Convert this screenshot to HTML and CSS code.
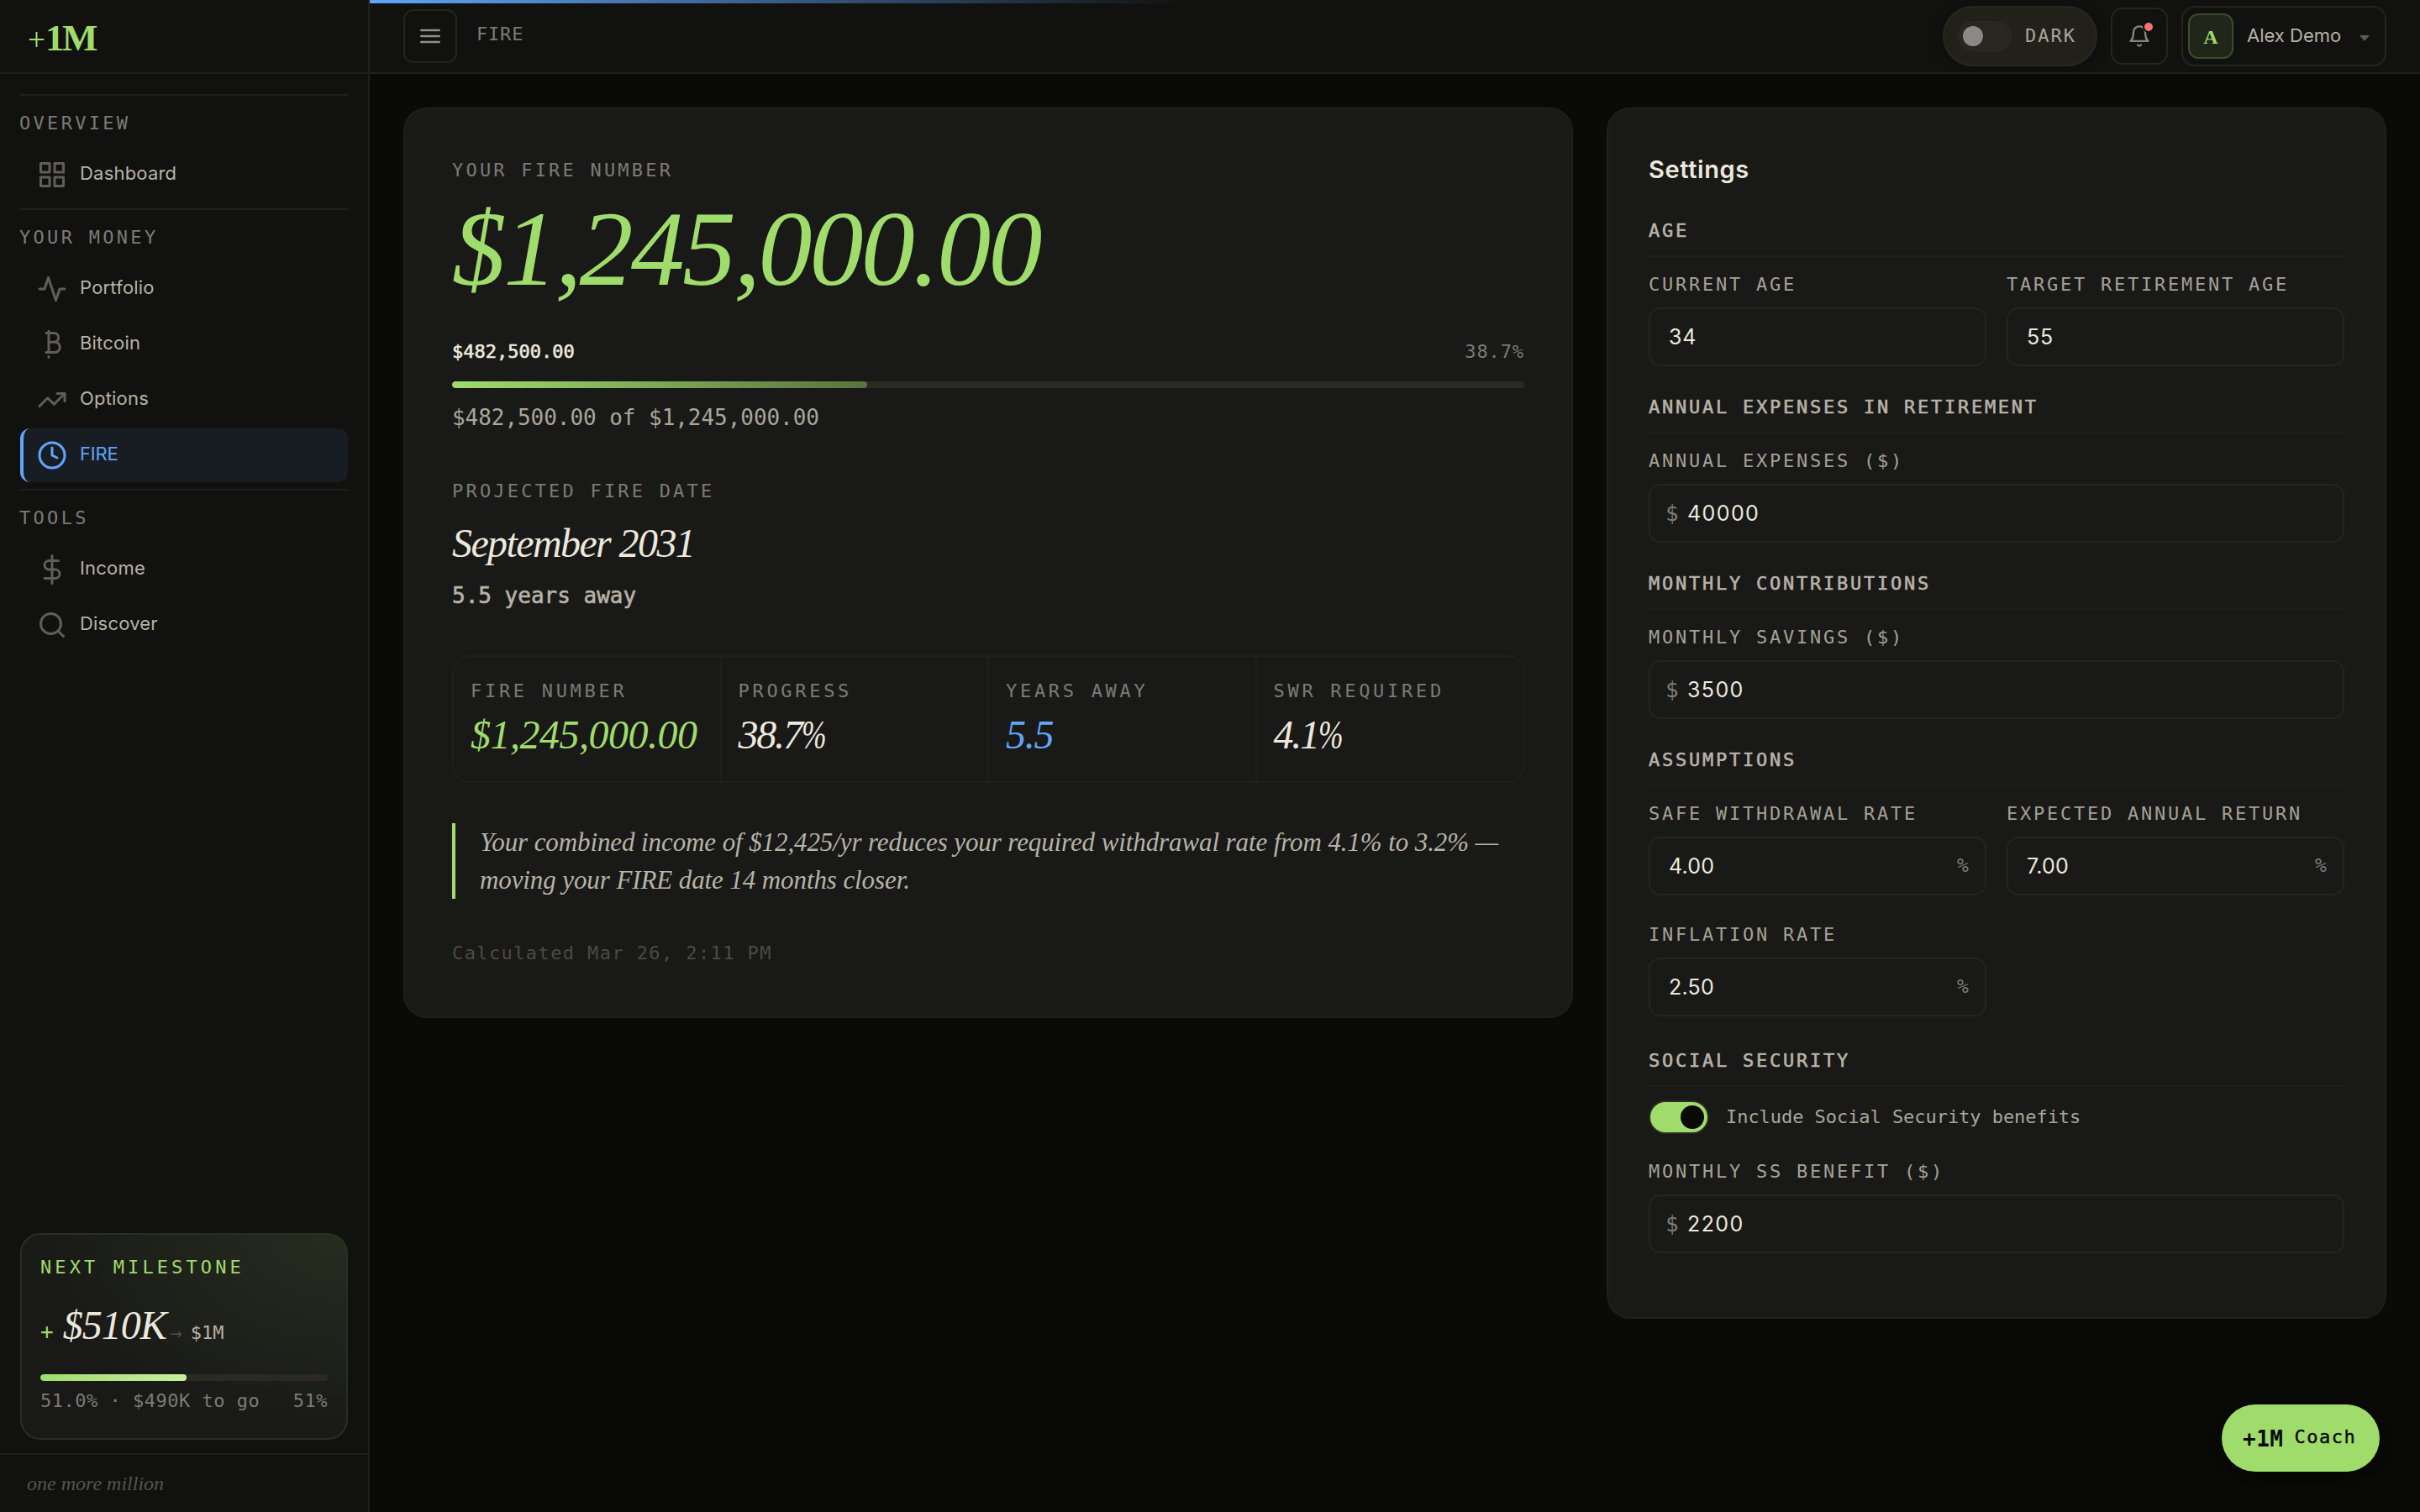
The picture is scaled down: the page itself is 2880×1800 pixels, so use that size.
FILE: index.html
```html
<!DOCTYPE html>
<html lang="en">
<head>
    <meta charset="UTF-8">
    <meta name="viewport" content="width=device-width, initial-scale=1.0">
    <title>+1M - FIRE</title>
    <link rel="stylesheet" href="styles.css">
</head>
<body>
    <div class="app">
        <aside class="sidebar">
            <div class="logo"><span class="logo-plus">+</span>1M</div>
            <nav class="nav">
                <div class="nav-section">
                    <div class="nav-label">Overview</div>
                    <a class="nav-item">
                        <svg class="icon" viewBox="0 0 24 24"><rect x="3" y="3" width="7" height="7"/><rect x="14" y="3" width="7" height="7"/><rect x="3" y="14" width="7" height="7"/><rect x="14" y="14" width="7" height="7"/></svg>
                        <span>Dashboard</span>
                    </a>
                </div>
                <div class="nav-section">
                    <div class="nav-label">Your Money</div>
                    <a class="nav-item">
                        <svg class="icon" viewBox="0 0 24 24"><path d="M22 12h-4l-3 9L9 3l-3 9H2"/></svg>
                        <span>Portfolio</span>
                    </a>
                    <a class="nav-item">
                        <svg class="icon" viewBox="0 0 24 24"><path d="M9.300 1.500v16.800M7.300 3h6.200a3.600 3.600 0 0 1 0 7.200H9.300h4.900a4 4 0 0 1 0 8.100H7.300M9.300 21.700v.4"/></svg>
                        <span>Bitcoin</span>
                    </a>
                    <a class="nav-item">
                        <svg class="icon" viewBox="0 0 24 24"><path d="M22 7l-8.500 8.500-5-5L2 17"/><path d="M16 7h6v6"/></svg>
                        <span>Options</span>
                    </a>
                    <a class="nav-item active">
                        <svg class="icon" viewBox="0 0 24 24"><circle cx="12" cy="12" r="10"/><path d="M12 6v6l4 2"/></svg>
                        <span>FIRE</span>
                    </a>
                </div>
                <div class="nav-section">
                    <div class="nav-label">Tools</div>
                    <a class="nav-item">
                        <svg class="icon" viewBox="0 0 24 24"><path d="M12 1v22M17 5H9.500a3.500 3.500 0 0 0 0 7h5a3.500 3.500 0 0 1 0 7H6"/></svg>
                        <span>Income</span>
                    </a>
                    <a class="nav-item">
                        <svg class="icon" viewBox="0 0 24 24"><circle cx="11" cy="11" r="8"/><path d="M21 21l-4.350-4.350"/></svg>
                        <span>Discover</span>
                    </a>
                </div>
            </nav>

            <div class="milestone">
                <div class="milestone-title">Next Milestone</div>
                <div class="milestone-row">
                    <span class="plus">+</span>
                    <span class="amount">$510K</span>
                    <span class="arrow">→</span>
                    <span class="goal">$1M</span>
                </div>
                <div class="bar"><div class="bar-fill light" style="width: 51%;"></div></div>
                <div class="milestone-meta"><span>51.0% · $490K to go</span><span>51%</span></div>
            </div>
            <div class="tagline">one more million</div>
        </aside>

        <div class="content">
            <header class="topbar">
                <button class="menu-btn">
                    <svg width="24" height="18" viewBox="0 0 24 18"><path d="M1.300 2h21.400M1.300 9h21.400M1.300 16h21.400"/></svg>
                </button>
                <div class="crumb">FIRE</div>
                <div class="theme-toggle">
                    <span class="theme-track"><span class="theme-knob"></span></span>
                    <span>DARK</span>
                </div>
                <button class="bell-btn">
                    <svg width="28" height="28" viewBox="0 0 24 24"><path d="M18 8A6 6 0 0 0 6 8c0 7-3 9-3 9h18s-3-2-3-9"/><path d="M13.730 21a2 2 0 0 1-3.460 0"/></svg>
                    <span class="dot"></span>
                </button>
                <div class="user">
                    <span class="avatar">A</span>
                    <span class="user-name">Alex Demo</span>
                    <span class="caret"></span>
                </div>
            </header>

            <main class="main">
                <section class="card result">
                    <div class="label">Your FIRE Number</div>
                    <div class="fire-number">$1,245,000.00</div>
                    <div class="progress-head"><strong>$482,500.00</strong><span>38.7%</span></div>
                    <div class="bar"><div class="bar-fill fade" style="width: 38.7%;"></div></div>
                    <div class="progress-text">$482,500.00 of $1,245,000.00</div>

                    <div class="label date-label">Projected FIRE Date</div>
                    <div class="fire-date">September 2031</div>
                    <div class="years">5.5 years away</div>

                    <div class="stats">
                        <div class="stat">
                            <div class="label">FIRE Number</div>
                            <div class="value green">$1,245,000.00</div>
                        </div>
                        <div class="stat">
                            <div class="label">Progress</div>
                            <div class="value tight">38.7<span class="pct">%</span></div>
                        </div>
                        <div class="stat">
                            <div class="label">Years Away</div>
                            <div class="value blue">5.5</div>
                        </div>
                        <div class="stat">
                            <div class="label">SWR Required</div>
                            <div class="value tight">4.1<span class="pct">%</span></div>
                        </div>
                    </div>

                    <blockquote class="quote">Your combined income of $12,425/yr reduces your required withdrawal rate from 4.1% to 3.2% —<br>moving your FIRE date 14 months closer.</blockquote>
                    <div class="calculated">Calculated Mar 26, 2:11 PM</div>
                </section>

                <section class="card settings">
                    <h2>Settings</h2>

                    <div class="group">
                        <h3>Age</h3>
                        <div class="fields">
                            <div class="field">
                                <label>Current Age</label>
                                <div class="input">34</div>
                            </div>
                            <div class="field">
                                <label>Target Retirement Age</label>
                                <div class="input">55</div>
                            </div>
                        </div>
                    </div>

                    <div class="group">
                        <h3>Annual Expenses in Retirement</h3>
                        <div class="field">
                            <label>Annual Expenses ($)</label>
                            <div class="input money"><span class="prefix">$</span>40000</div>
                        </div>
                    </div>

                    <div class="group">
                        <h3>Monthly Contributions</h3>
                        <div class="field">
                            <label>Monthly Savings ($)</label>
                            <div class="input money"><span class="prefix">$</span>3500</div>
                        </div>
                    </div>

                    <div class="group assumptions">
                        <h3>Assumptions</h3>
                        <div class="fields">
                            <div class="field">
                                <label>Safe Withdrawal Rate</label>
                                <div class="input percent">4.00<span class="suffix">%</span></div>
                            </div>
                            <div class="field">
                                <label>Expected Annual Return</label>
                                <div class="input percent">7.00<span class="suffix">%</span></div>
                            </div>
                            <div class="field">
                                <label>Inflation Rate</label>
                                <div class="input percent">2.50<span class="suffix">%</span></div>
                            </div>
                        </div>
                    </div>

                    <div class="group">
                        <h3>Social Security</h3>
                        <div class="switch-row">
                            <span class="switch"><span class="switch-knob"></span></span>
                            <span>Include Social Security benefits</span>
                        </div>
                        <div class="field">
                            <label>Monthly SS Benefit ($)</label>
                            <div class="input money"><span class="prefix">$</span>2200</div>
                        </div>
                    </div>
                </section>
            </main>
        </div>

        <div class="load-bar"></div>
        <button class="coach"><b>+1M</b><span>Coach</span></button>
    </div>
</body>
</html>
```
FILE: styles.css
```css
* {
    box-sizing: border-box;
}
body {
    margin: 0;
    background: #0a0a08;
    color: #ece8de;
    font-family: Inter, "Open Sans", sans-serif;
    font-size: 22px;
}
button {
    margin: 0;
    padding: 0;
    background: none;
    font: inherit;
    color: inherit;
}
svg {
    fill: none;
    stroke: currentColor;
    stroke-width: 2;
    stroke-linecap: round;
    stroke-linejoin: round;
}
.app {
    display: flex;
    width: 2880px;
    height: 1800px;
    overflow: hidden;
    position: relative;
}

/* Sidebar */
.sidebar {
    width: 440px;
    display: flex;
    flex-direction: column;
    background: #11110f;
    border-right: 2px solid #1f1f1d;
}
.logo {
    height: 88px;
    padding-left: 33px;
    border-bottom: 2px solid #1f1f1d;
    font-family: "Liberation Serif", serif;
    font-weight: bold;
    font-size: 45px;
    line-height: 90px;
    letter-spacing: -2.5px;
    color: #a0dc6c;
}
.logo-plus {
    font-weight: normal;
    font-size: 37px;
    letter-spacing: 0;
}
.nav {
    flex: 1;
    padding: 24px 24px 0;
}
.nav-section {
    border-top: 2px solid #1f1f1d;
    margin-bottom: 8px;
}
.nav-label {
    height: 62px;
    line-height: 65px;
    font-family: "DejaVu Sans Mono", monospace;
    letter-spacing: 3.3px;
    text-transform: uppercase;
    text-indent: -1px;
    color: #7c7b76;
}
.nav-item {
    display: flex;
    align-items: center;
    gap: 15px;
    height: 64px;
    margin-bottom: 2px;
    padding-left: 16px;
    border-left: 4px solid transparent;
    border-radius: 12px;
    letter-spacing: 0.2px;
    color: #b7b3a7;
}
.nav-item:last-child {
    margin-bottom: 0;
}
.nav-item span {
    padding-bottom: 4px;
}
.icon {
    width: 36px;
    height: 36px;
    color: #5f5e57;
}
.active {
    background: #181d24;
    border-left-color: #60a5fa;
    letter-spacing: -0.2px;
    color: #60a5fa;
}
.active .icon {
    color: #60a5fa;
}
.milestone {
    height: 246px;
    margin: 0 24px 16px;
    padding: 22px;
    border: 2px solid #283022;
    border-radius: 24px;
    background: radial-gradient(ellipse at 100% 0, #272d20 0, #191917 70%);
    font-family: "DejaVu Sans Mono", monospace;
}
.milestone-title {
    height: 34px;
    line-height: 34px;
    letter-spacing: 4.1px;
    text-transform: uppercase;
    color: #a0dc6c;
}
.milestone-row {
    display: flex;
    align-items: baseline;
    height: 60px;
    line-height: 60px;
    margin-top: 22px;
}
.plus {
    font-size: 26px;
    color: #a0dc6c;
}
.amount {
    margin-left: 11px;
    font-family: "Liberation Serif", serif;
    font-style: italic;
    font-size: 48px;
    letter-spacing: -1px;
}
.arrow {
    width: 16px;
    margin-left: 4px;
    font-family: "DejaVu Sans", sans-serif;
    font-size: 18px;
    color: #4e4f45;
}
.goal {
    margin-left: 9px;
    color: #b7b3a7;
}
.milestone .bar {
    margin-top: 28px;
}
.milestone-meta {
    display: flex;
    justify-content: space-between;
    height: 32px;
    line-height: 32px;
    margin-top: 8px;
    letter-spacing: 0.5px;
    color: #7c7b76;
}
.bar {
    height: 8px;
    border-radius: 4px;
    background: #2a2a23;
    overflow: hidden;
}
.bar-fill {
    height: 100%;
    border-radius: 4px;
}
.light {
    background: linear-gradient(90deg, #a0dc6c, #c8ee9c);
}
.fade {
    background: linear-gradient(90deg, #a0dc6c, #587340);
}
.tagline {
    height: 70px;
    padding-left: 32px;
    border-top: 2px solid #1f1f1d;
    font-family: "Liberation Serif", serif;
    font-style: italic;
    font-size: 24px;
    line-height: 68px;
    color: #55544c;
}

/* Top bar */
.content {
    flex: 1;
}
.topbar {
    display: flex;
    align-items: center;
    height: 88px;
    padding: 0 40px;
    background: #11110f;
    border-bottom: 2px solid #1f1f1d;
}
.menu-btn {
    display: flex;
    align-items: center;
    justify-content: center;
    width: 64px;
    height: 64px;
    border: 2px solid #25251e;
    border-radius: 12px;
    color: #8f8e89;
}
.menu-btn svg {
    stroke-width: 2.6;
}
.crumb {
    flex: 1;
    padding: 0 0 5px 23px;
    font-family: "DejaVu Sans Mono", monospace;
    letter-spacing: 0.8px;
    color: #7c7b76;
}
.theme-toggle {
    display: flex;
    align-items: center;
    gap: 16px;
    width: 184px;
    height: 72px;
    padding: 0 16px;
    border: 2px solid #282820;
    border-radius: 36px;
    background: #21211a;
    box-shadow: 0 2px 16px rgba(0, 0, 0, 0.3);
    font-family: "DejaVu Sans Mono", monospace;
    letter-spacing: 2px;
    color: #aaa69a;
}
.theme-toggle span:last-child {
    padding-bottom: 2px;
}
.theme-track {
    display: flex;
    align-items: center;
    width: 64px;
    height: 36px;
    padding-left: 4px;
    border: 2px solid #292921;
    border-radius: 18px;
    background: #272720;
}
.theme-knob {
    width: 24px;
    height: 24px;
    border-radius: 50%;
    background: #8a8985;
}
.bell-btn {
    display: flex;
    align-items: center;
    justify-content: center;
    position: relative;
    width: 68px;
    height: 68px;
    margin: 0 16px;
    border: 2px solid #25251e;
    border-radius: 14px;
    color: #85847e;
}
.dot {
    position: absolute;
    top: 14px;
    right: 14px;
    width: 14px;
    height: 14px;
    border: 2px solid #11110f;
    border-radius: 50%;
    background: #f87171;
}
.user {
    display: flex;
    align-items: center;
    width: 244px;
    height: 72px;
    padding: 0 18px 0 6px;
    border: 2px solid #25251e;
    border-radius: 16px;
    color: #b7b3a7;
}
.avatar {
    width: 54px;
    height: 54px;
    border: 2px solid #3b4c2b;
    border-radius: 12px;
    background: #21261b;
    font-family: "Liberation Serif", serif;
    font-weight: bold;
    font-size: 24px;
    line-height: 52px;
    text-align: center;
    color: #a0dc6c;
}
.user-name {
    flex: 1;
    padding: 0 0 3px 16px;
}
.caret {
    border: 6px solid transparent;
    border-top: 7px solid #5c5b55;
    border-bottom: 0;
    margin-top: 4px;
}

/* Cards */
.main {
    display: grid;
    grid-template-columns: 3fr 2fr;
    gap: 40px;
    align-items: start;
    padding: 40px;
}
.card {
    border: 2px solid #1f1f1d;
    border-radius: 28px;
    background: #191917;
    font-family: "DejaVu Sans Mono", monospace;
}
.result {
    height: 1084px;
    padding: 56px;
}
.label {
    height: 34px;
    line-height: 34px;
    letter-spacing: 3.2px;
    text-transform: uppercase;
    color: #7c7b76;
}
.fire-number {
    margin-top: 12px;
    font-family: "Liberation Serif", serif;
    font-style: italic;
    font-size: 128px;
    line-height: 128px;
    letter-spacing: -2.8px;
    color: #a0dc6c;
}
.progress-head {
    display: flex;
    justify-content: space-between;
    height: 32px;
    line-height: 32px;
    margin-top: 43px;
    color: #7c7b76;
}
.progress-head span {
    letter-spacing: 0.9px;
}
.progress-head strong {
    font-weight: normal;
    -webkit-text-stroke: 0.6px;
    color: #ece8de;
}
.result .bar {
    margin-top: 19px;
}
.progress-text {
    margin-top: 17px;
    font-size: 26px;
    line-height: 36px;
    letter-spacing: -0.05px;
    color: #aaa69a;
}
.date-label {
    margin-top: 53px;
}
.fire-date {
    margin-top: 17px;
    font-family: "Liberation Serif", serif;
    font-style: italic;
    font-size: 48px;
    line-height: 56px;
    letter-spacing: -1.6px;
}
.years {
    margin-top: 16px;
    font-size: 26px;
    line-height: 36px;
    -webkit-text-stroke: 0.6px;
    color: #b7b3a7;
}
.stats {
    display: grid;
    grid-template-columns: repeat(4, 1fr);
    gap: 2px;
    height: 152px;
    margin-top: 53px;
    border: 2px solid #1f1f1d;
    border-radius: 20px;
    background: #1f1f1d;
    overflow: hidden;
}
.stat {
    padding: 24px 0 0 20px;
    background: #191917;
}
.stat .label {
    letter-spacing: 3.7px;
}
.value {
    margin-top: 7px;
    font-family: "Liberation Serif", serif;
    font-style: italic;
    font-size: 48px;
    line-height: 56px;
    letter-spacing: -0.5px;
}
.tight {
    letter-spacing: -2.2px;
}
.pct {
    display: inline-block;
    transform: scaleX(0.74);
    transform-origin: 0 50%;
}
.green {
    color: #a0dc6c;
}
.blue {
    color: #60a5fa;
    letter-spacing: -1.2px;
}
.quote {
    margin: 48px 0 0;
    height: 90px;
    padding: 0 0 0 29px;
    border-left: 4px solid #a0dc6c;
    font-family: "Liberation Serif", serif;
    font-style: italic;
    font-size: 31px;
    line-height: 45px;
    letter-spacing: -0.1px;
    white-space: nowrap;
    color: #b7b3a7;
}
.calculated {
    margin-top: 48px;
    line-height: 34px;
    letter-spacing: 1.4px;
    color: #4c4b45;
}

/* Settings */
.settings {
    height: 1442px;
    padding: 48px;
}
.settings h2 {
    margin: 0 0 34px;
    padding-top: 2px;
    font-family: Inter, "Open Sans", sans-serif;
    font-size: 29px;
    font-weight: 600;
    line-height: 44px;
    letter-spacing: 0.6px;
}
.settings h3 {
    margin: 0 0 16px;
    padding-bottom: 12px;
    border-bottom: 2px solid #1f1f1d;
    font-size: 22px;
    font-weight: normal;
    line-height: 34px;
    letter-spacing: 2.75px;
    text-transform: uppercase;
    -webkit-text-stroke: 0.6px;
    color: #b7b3a7;
}
.group {
    margin-bottom: 32px;
}
.assumptions {
    margin-bottom: 36px;
}
.fields {
    display: grid;
    grid-template-columns: 1fr 1fr;
    gap: 30px 24px;
}
.field label {
    display: block;
    margin-bottom: 10px;
    line-height: 34px;
    letter-spacing: 2.75px;
    text-transform: uppercase;
    white-space: nowrap;
    color: #a5a196;
}
.input {
    display: flex;
    align-items: center;
    height: 70px;
    padding: 0 19px 0 22px;
    border: 2px solid #25251e;
    border-radius: 14px;
    font-family: Inter, "Open Sans", sans-serif;
    font-size: 25px;
    letter-spacing: 0.8px;
}
.money {
    padding-left: 18px;
    letter-spacing: 1.4px;
}
.percent {
    letter-spacing: 0.2px;
}
.prefix {
    width: 26px;
    font-family: "DejaVu Sans Mono", monospace;
    font-size: 26px;
    color: #7c7b76;
}
.suffix {
    margin-left: auto;
    padding-bottom: 2px;
    font-family: "DejaVu Sans Mono", monospace;
    font-size: 23px;
    color: #7c7b76;
}
.switch-row {
    display: flex;
    align-items: center;
    gap: 20px;
    height: 40px;
    margin-bottom: 28px;
    letter-spacing: -0.05px;
    color: #aaa69a;
}
.switch-row span:last-child {
    padding-bottom: 2px;
}
.switch {
    display: flex;
    align-items: center;
    justify-content: flex-end;
    width: 72px;
    height: 40px;
    padding-right: 4px;
    border: 2px solid #2a2e22;
    border-radius: 20px;
    background: #a0dc6c;
}
.switch-knob {
    width: 28px;
    height: 28px;
    border-radius: 50%;
    background: #0a0a08;
}

/* Floating elements */
.load-bar {
    position: absolute;
    top: 0;
    left: 440px;
    right: 0;
    height: 4px;
    background: linear-gradient(90deg, #60a5fa, transparent 40%);
}
.coach {
    position: absolute;
    right: 48px;
    bottom: 48px;
    display: flex;
    align-items: center;
    gap: 13px;
    width: 188px;
    height: 80px;
    padding-left: 25px;
    border: 0;
    border-radius: 40px;
    background: #a0dc6c;
    box-shadow: 0 8px 32px rgba(0, 0, 0, 0.5);
    font-family: "DejaVu Sans Mono", monospace;
    letter-spacing: 1.5px;
    color: #0a0a08;
}
.coach b {
    padding-top: 2px;
    font-size: 26px;
    letter-spacing: 0.5px;
}
.coach span {
    padding-bottom: 3px;
    -webkit-text-stroke: 0.4px;
}
```
